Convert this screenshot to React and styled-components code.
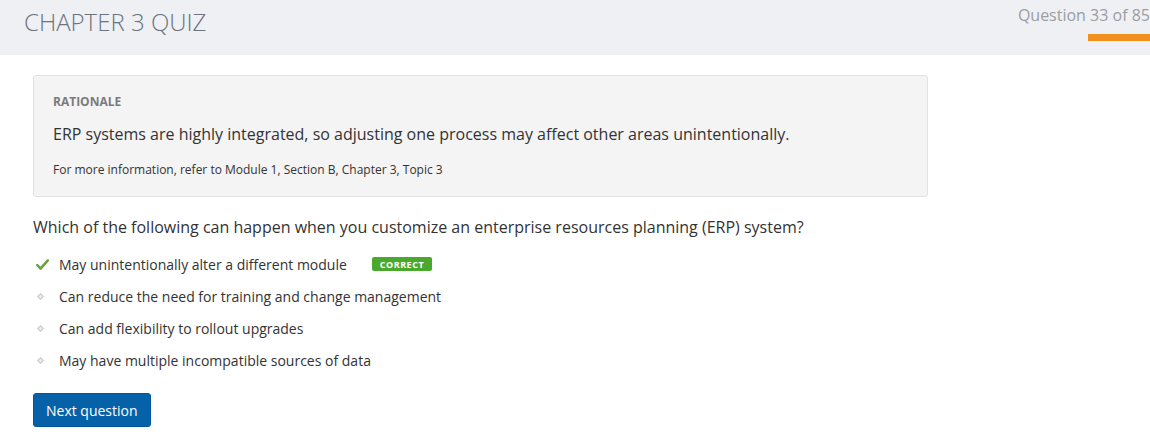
import React from "react";
import styled, { createGlobalStyle } from "styled-components";

const GlobalStyle = createGlobalStyle`
  body {
    margin: 0;
    background: #ffffff;
    font-family: "Open Sans", "Liberation Sans", sans-serif;
  }
`;

const Page = styled.div`
  width: 1150px;
  height: 434px;
  overflow: hidden;
`;

const Header = styled.div`
  height: 55px;
  background-color: #eff0f4;
  display: flex;
  justify-content: space-between;
  align-items: flex-start;
  padding-left: 24px;
  box-sizing: border-box;
`;

const Title = styled.h1`
  margin: 7px 0 0 0;
  font-size: 24px;
  font-weight: 300;
  color: #6b737c;
  line-height: 30px;
`;

const Progress = styled.div`
  display: flex;
  flex-direction: column;
  align-items: flex-end;
  padding-top: 4px;
`;

const Counter = styled.div`
  font-size: 16px;
  color: #9a9da2;
  line-height: 22px;
  white-space: nowrap;
`;

const ProgressBar = styled.div`
  width: 62px;
  height: 7px;
  margin-top: 8px;
  background-color: #f18f1f;
`;

const Content = styled.div`
  padding: 20px 0 0 33px;
`;

const RationaleBox = styled.div`
  width: 895px;
  box-sizing: border-box;
  background-color: #f4f4f4;
  border: 1px solid #e2e2e2;
  border-radius: 3px;
  padding: 18px 19px 18px 19px;
`;

const RationaleLabel = styled.div`
  font-size: 12px;
  font-weight: 700;
  color: #7b7b7b;
  line-height: 16px;
`;

const RationaleText = styled.div`
  margin-top: 12px;
  font-size: 16px;
  color: #333;
  line-height: 24px;
`;

const RationaleRef = styled.div`
  margin-top: 16px;
  font-size: 12px;
  color: #333;
  line-height: 16px;
`;

const Question = styled.div`
  margin-top: 18px;
  font-size: 16px;
  color: #333;
  line-height: 24px;
`;

const Options = styled.ul`
  list-style: none;
  margin: 9px 0 0 0;
  padding: 0;
`;

const Option = styled.li`
  display: flex;
  align-items: center;
  height: 32px;
  font-size: 14px;
  color: #333;
`;

const Marker = styled.span`
  width: 26px;
  display: flex;
  align-items: center;
  padding-left: 3px;
  box-sizing: border-box;
`;

const Bullet = styled.span`
  width: 3px;
  height: 3px;
  margin-left: 2px;
  border: 1px solid #c8c8c8;
  background-color: #eeeeee;
  transform: rotate(45deg);
`;

const Badge = styled.span`
  margin-left: 25px;
  height: 14px;
  display: inline-flex;
  align-items: center;
  background-color: #4aa82c;
  color: #fff;
  font-size: 9px;
  font-weight: 700;
  letter-spacing: 0.5px;
  border-radius: 2px;
  padding: 0 8px;
`;

const NextButton = styled.button`
  margin-top: 17px;
  height: 34px;
  padding: 0 12px;
  background-color: #0662a8;
  color: #fff;
  border: 1px solid #05569a;
  border-radius: 3px;
  font-family: "Open Sans", "Liberation Sans", sans-serif;
  font-size: 14px;
  cursor: pointer;
`;

const Check = () => (
  <svg width="13" height="11" viewBox="0 0 13 11">
    <path
      d="M1.2 6 L4.6 9.6 L11.8 1.4"
      fill="none"
      stroke="#67a03a"
      strokeWidth="2.4"
      strokeLinecap="round"
      strokeLinejoin="round"
    />
  </svg>
);

const options = [
  { text: "May unintentionally alter a different module", correct: true },
  { text: "Can reduce the need for training and change management" },
  { text: "Can add flexibility to rollout upgrades" },
  { text: "May have multiple incompatible sources of data" },
];

export default function App() {
  return (
    <Page>
      <GlobalStyle />
      <Header>
        <Title>CHAPTER 3 QUIZ</Title>
        <Progress>
          <Counter>Question 33 of 85</Counter>
          <ProgressBar />
        </Progress>
      </Header>
      <Content>
        <RationaleBox>
          <RationaleLabel>RATIONALE</RationaleLabel>
          <RationaleText>
            ERP systems are highly integrated, so adjusting one process may
            affect other areas unintentionally.
          </RationaleText>
          <RationaleRef>
            For more information, refer to Module 1, Section B, Chapter 3, Topic 3
          </RationaleRef>
        </RationaleBox>
        <Question>
          Which of the following can happen when you customize an enterprise
          resources planning (ERP) system?
        </Question>
        <Options>
          {options.map((o) => (
            <Option key={o.text}>
              <Marker>{o.correct ? <Check /> : <Bullet />}</Marker>
              {o.text}
              {o.correct && <Badge>CORRECT</Badge>}
            </Option>
          ))}
        </Options>
        <NextButton>Next question</NextButton>
      </Content>
    </Page>
  );
}
